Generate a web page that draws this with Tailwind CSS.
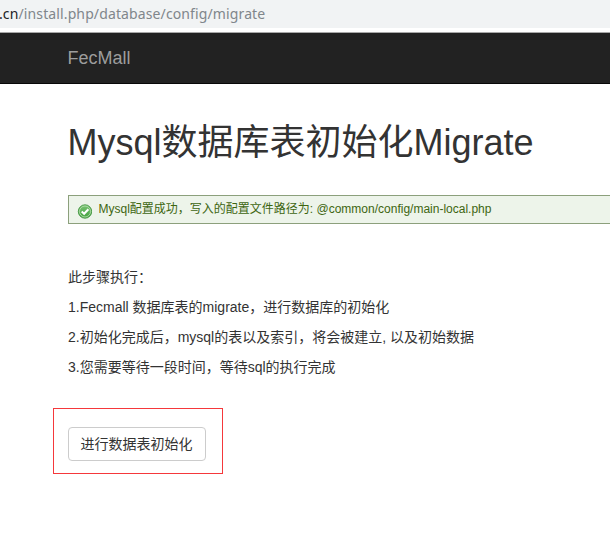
<!DOCTYPE html>
<html lang="zh-CN">
<head>
<meta charset="utf-8">
<title>FecMall</title>
<script src="https://cdn.jsdelivr.net/npm/@tailwindcss/browser@4"></script>
</head>
<body class="h-[560px] overflow-hidden bg-white font-['Liberation_Sans','Noto_Sans_CJK_SC',sans-serif] text-sm leading-5 text-[#333]">
<div class="flex h-7 items-center overflow-hidden bg-[#f1f3f4] font-['Noto_Sans',sans-serif] text-[14px] tracking-[0.12px] whitespace-nowrap text-[#80868b]"><span class="-ml-px"><span class="text-[#202124]">.cn</span>/install.php/database/config/migrate</span></div>
<nav class="mt-1 flex h-[52px] items-center border-t border-b border-t-[#a8a8a8] border-b-[#080808] bg-[#222] pl-[67.5px] text-lg text-[#9d9d9d]">FecMall</nav>
<main class="pl-[68px] whitespace-nowrap">
<h1 class="mt-[39px] -ml-[0.5px] h-10 text-[36px] leading-10">Mysql数据库表初始化Migrate</h1>
<div class="mt-8 flex h-[29px] items-center border border-r-0 border-[#8ca07c] bg-[#edf4ea] pl-[9px] text-xs text-[#3d6611]">
<svg class="mt-[3px] mr-[5px] -ml-px h-[15px] w-[15px] shrink-0" viewBox="0 0 15 15">
<defs><linearGradient id="g" x1="0" y1="0" x2="0" y2="1"><stop offset="0" stop-color="#79c473"/><stop offset="1" stop-color="#43a13f"/></linearGradient></defs>
<circle cx="8" cy="7.5" r="6.7" fill="url(#g)" stroke="#459643" stroke-width=".9"/>
<circle cx="8" cy="7.5" r="5.5" fill="none" stroke="#b2deac" stroke-width=".9"/>
<path d="M4.7 7.6 7.1 9.8 11.4 5.2" fill="none" stroke="#fff" stroke-width="2"/>
</svg>
<span class="mb-[2px] pl-[1.5px]">Mysql配置成功，写入的配置文件路径为: @common/config/main-local.php</span>
</div>
<div class="mt-[43px] flex flex-col gap-[10px]">
<p>此步骤执行：</p>
<p>1.Fecmall 数据库表的migrate，进行数据库的初始化</p>
<p>2.初始化完成后，mysql的表以及索引，将会被建立, 以及初始数据</p>
<p>3.您需要等待一段时间，等待sql的执行完成</p>
</div>
<div class="mt-[31px] -ml-[15px] flex h-[66px] w-[170px] border border-[#f5383b] pt-[18px] pl-[14px]">
<button class="h-[34px] w-[138px] rounded border border-[#ccc] bg-white pr-px text-center text-sm leading-5">进行数据表初始化</button>
</div>
</main>
</body>
</html>
